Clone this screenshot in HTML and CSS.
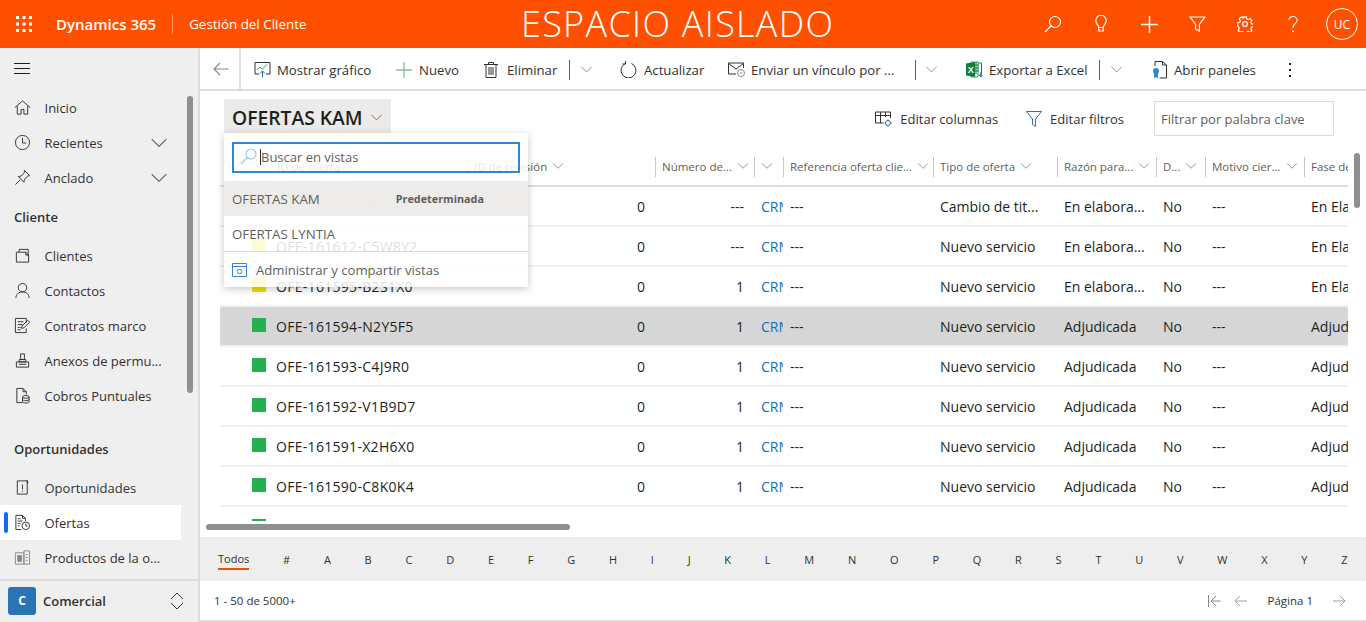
FILE: index.html
```html
<!DOCTYPE html>
<html lang="es">
<head>
<meta charset="utf-8">
<title>Ofertas KAM</title>
<link rel="stylesheet" href="styles.css">
</head>
<body>
<svg class="defs" width="0" height="0" aria-hidden="true">
  <symbol id="chev" viewBox="0 0 16 16"><path d="M1.5 4.5 8 11l6.5-6.5" fill="none" stroke="currentColor"/></symbol>
</svg>

<header class="topbar">
  <svg class="waffle" width="16" height="16" viewBox="0 0 16 16" fill="#fff"><rect x="0" y="0" width="3" height="3"/><rect x="6.5" y="0" width="3" height="3"/><rect x="13" y="0" width="3" height="3"/><rect x="0" y="6.5" width="3" height="3"/><rect x="6.5" y="6.5" width="3" height="3"/><rect x="13" y="6.5" width="3" height="3"/><rect x="0" y="13" width="3" height="3"/><rect x="6.5" y="13" width="3" height="3"/><rect x="13" y="13" width="3" height="3"/></svg>
  <span class="brand">Dynamics 365</span>
  <span class="brand-sep"></span>
  <span class="app-name">Gestión del Cliente</span>
  <span class="sandbox">ESPACIO AISLADO</span>
  <div class="top-icons">
    <svg width="18" height="18" viewBox="0 0 18 18" fill="none" stroke="#fff" stroke-width="1.2"><circle cx="11" cy="7" r="5.5"/><path d="M7 11 1 17"/></svg>
    <svg width="14" height="18" viewBox="0 0 16 20" fill="none" stroke="#fff" stroke-width="1.3"><path d="M5.5 14c0-3-3.5-4-3.500-8a5.500 5.500 0 0 1 12 0c0 4-3.500 5-3.500 8z"/><path d="M5.500 14v4h5v-4"/></svg>
    <svg width="17" height="17" viewBox="0 0 17 17" stroke="#fff" stroke-width="1.400"><path d="M8.500 0v17M0 8.500h17"/></svg>
    <svg width="17" height="16" viewBox="0 0 18 17" fill="none" stroke="#fff" stroke-width="1.200"><path d="M1 1h16l-6 8v7l-4-2V9z"/></svg>
    <svg width="16" height="16" viewBox="0 0 18 18" fill="none" stroke="#fff" stroke-width="1.300"><circle cx="9" cy="9" r="2.700"/><path d="M7.500 1h3l.5 2.300 1.700.8 2-1.200 2 2.100-1.200 2 .7 1.700 2.300.5v3l-2.300.5-.7 1.700 1.200 2-2 2-2-1.200-1.700.7-.5 2.300h-3l-.5-2.300-1.700-.7-2 1.200-2-2 1.200-2-.7-1.700L.800 10.500v-3l2.300-.5.7-1.700-1.200-2 2-2.100 2 1.200 1.700-.8z"/></svg>
    <svg width="10" height="17" viewBox="0 0 12 20" fill="none" stroke="#fff" stroke-width="1.300"><path d="M1 5a5 4.500 0 1 1 8 3.500C7 10 6 11 6 14"/><circle cx="6" cy="18" r=".6" fill="#fff"/></svg>
  </div>
  <span class="avatar">UC</span>
</header>

<div class="shell">
  <nav class="sidebar">
    <div class="hamburger"><span></span><span></span><span></span></div>
    <a class="nav-item"><svg class="nav-ico" viewBox="0 0 18 18"><path d="M1 9 9 2l8 7M3.500 7.500V16h4v-5h3v5h4V7.500"/></svg><span>Inicio</span></a>
    <a class="nav-item"><svg class="nav-ico" viewBox="0 0 18 18"><circle cx="9" cy="9" r="7.500"/><path d="M9 4v5.500h4"/></svg><span>Recientes</span><svg class="nav-chev"><use href="#chev"/></svg></a>
    <a class="nav-item"><svg class="nav-ico" viewBox="0 0 18 18"><path d="m11 1.500 5.500 5.500-2 .5-3.500 3.500-.5 3-6-6 3-.5L11 4zM6.500 11.500 1.500 16.500"/></svg><span>Anclado</span><svg class="nav-chev"><use href="#chev"/></svg></a>
    <h3 class="nav-head">Cliente</h3>
    <a class="nav-item"><svg class="nav-ico" viewBox="0 0 18 18"><path d="M2.500 5.500h10l3 3V16h-13zM5.500 5.500v-3h9.500V9M12.500 5.500v3h3"/></svg><span>Clientes</span></a>
    <a class="nav-item"><svg class="nav-ico" viewBox="0 0 18 18"><circle cx="9" cy="6" r="4.500"/><path d="M2 17c0-4 3-6.500 7-6.500s7 2.500 7 6.500"/></svg><span>Contactos</span></a>
    <a class="nav-item"><svg class="nav-ico" viewBox="0 0 18 18"><path d="M13 6V1.500H1.500v15h11.500V12M4 5h6M4 8h5M4 11h3M4 13.500h3"/><path d="m8 12 .5-2.500 6-6 2 2-6 6z"/></svg><span>Contratos marco</span></a>
    <a class="nav-item"><svg class="nav-ico" viewBox="0 0 18 18"><path d="M7 2h4v6H7zM5.500 8h7v2.500h-7zM2.500 10.500h13V16h-13zM5 13h8"/></svg><span>Anexos de permu...</span></a>
    <a class="nav-item"><svg class="nav-ico" viewBox="0 0 18 18"><path d="M9 16.500H3V1.500h6.500l3.500 3.500v3M9.500 1.500V5H13"/><ellipse cx="12.500" cy="10.500" rx="3.500" ry="1.500"/><path d="M9 10.500v5c0 .8 1.600 1.500 3.500 1.500s3.500-.7 3.500-1.500v-5M9 13c0 .8 1.600 1.500 3.500 1.500S16 13.800 16 13"/></svg><span>Cobros Puntuales</span></a>
    <h3 class="nav-head nav-head-gap">Oportunidades</h3>
    <a class="nav-item"><svg class="nav-ico" viewBox="0 0 18 18"><path d="M3.500 2h10.500v14H3.500zM9 6v5M9 12.500v1.200M13 2h1.500v3"/></svg><span>Oportunidades</span></a>
    <a class="nav-item nav-active"><svg class="nav-ico" viewBox="0 0 18 18"><path d="M8 16.500H2V1.500h7l3 3v3M9 1.500v3h3M4 5h3M4 7.500h5M4 10h3M4 12.500h2"/><circle cx="12.500" cy="12.500" r="4"/><path d="M12.500 10v2.700h2"/></svg><span>Ofertas</span></a>
    <a class="nav-item"><svg class="nav-ico nav-ico-grey" viewBox="0 0 18 18"><path d="M1.500 4h9v12h-9zM10.500 4V2h6v14h-6z"/><path d="M4 7h4v6H4z" fill="#8a8886"/><path d="M12.500 6h2M12.500 9h2M12.500 12h2"/></svg><span>Productos de la o...</span></a>
    <div class="nav-scroll"></div>
    <div class="area">
      <span class="area-badge">C</span>
      <span class="area-name">Comercial</span>
      <svg class="area-ud" width="14" height="18" viewBox="0 0 14 18" fill="none" stroke="#323130"><path d="m1 7 6-6 6 6M1 11l6 6 6-6"/></svg>
    </div>
  </nav>

  <main class="main">
    <div class="toolbar">
      <span class="tb-back"><svg width="16" height="14" viewBox="0 0 16 14" fill="none" stroke="#8a8886" stroke-width="1.100"><path d="M15.500 7H1M7 1 1 7l6 6"/></svg></span>
      <span class="tb-btn"><svg width="17" height="17" viewBox="0 0 17 17" fill="none"><path d="M5 13H1V1.500h15V13h-4" stroke="#323130"/><path d="m3 9 3-3 2.500 2L13 3.500" stroke="#2aa64a"/><path d="M8.500 16.500V10M6 12.500 8.500 10l2.500 2.500" stroke="#1f6fb2"/></svg>Mostrar gráfico</span>
      <span class="tb-btn"><svg width="16" height="16" viewBox="0 0 16 16" stroke="#7cc795" stroke-width="1.300"><path d="M8 0v16M0 8h16"/></svg><span class="t-nuevo">Nuevo</span></span>
      <span class="tb-btn"><svg width="14" height="16" viewBox="0 0 14 16" fill="none" stroke="#323130"><path d="M0 2.500h14M4.500 2.500V.5h5v2M2 2.500v13h10v-13M5 5v8M7 5v8M9 5v8"/></svg><span class="t-elim">Eliminar</span></span>
      <span class="tb-sep"></span>
      <span class="tb-chev"><svg width="13" height="13"><use href="#chev"/></svg></span>
      <span class="tb-btn"><svg width="17" height="17" viewBox="0 0 17 17" fill="none" stroke="#323130"><path d="M5.500 2.500a7.500 7.500 0 1 0 6 0M5.500 0v3H2.500" /></svg><span class="t-act">Actualizar</span></span>
      <span class="tb-btn"><svg width="17" height="15" viewBox="0 0 17 15" fill="none" stroke="#323130"><path d="M8 12H.5V1h15v5M.5 1.500 8 7l7.500-5.500"/><circle cx="13" cy="11" r="3.500" stroke="#8a8886"/><path d="M11.500 11h3" stroke="#8a8886"/></svg>Enviar un vínculo por ...</span>
      <span class="tb-sep"></span>
      <span class="tb-chev tb-chev-warm"><svg width="13" height="13"><use href="#chev"/></svg></span>
      <span class="tb-btn"><svg width="17" height="17" viewBox="0 0 17 17"><path d="M5 1h7v15H5z" fill="#fff" stroke="#21a366"/><path d="M7 4h6M7 7h6M7 10h6M10 1v12M12.500 2h3v12h-3" stroke="#107c41" fill="none"/><path d="M0 2.500 9 1v15L0 14.500z" fill="#107c41"/><text x="1.800" y="11.500" class="xl">X</text><path d="M15 11v5M13.500 14.500 15 16l1.500-1.500" stroke="#1f6fb2" fill="none"/></svg>Exportar a Excel</span>
      <span class="tb-sep"></span>
      <span class="tb-chev"><svg width="13" height="13"><use href="#chev"/></svg></span>
      <span class="tb-btn"><svg width="15" height="18" viewBox="0 0 15 18" fill="none"><path d="M3 5V.5h7.500L14.500 4v13h-7" stroke="#323130"/><path d="M10.500.5V4h4" stroke="#323130"/><circle cx="4" cy="10" r="3" fill="#2b88d8"/><path d="M2 12v5.500l2-1.500 2 1.500V12" fill="#2b88d8"/></svg><span class="t-abrir">Abrir paneles</span></span>
      <span class="tb-more"><i></i><i></i><i></i></span>
    </div>

    <div class="titlebar">
      <button class="view-btn"><span>OFERTAS KAM</span><svg width="13" height="13" class="view-chev"><use href="#chev"/></svg></button>
      <div class="title-actions">
        <span class="act"><svg width="17" height="16" viewBox="0 0 17 16" fill="none" stroke="#323130"><path d="M.5 1h15v6M.5 1v11h8M.5 4.500h15M5.500 1v11M10.500 1v5"/><circle cx="13" cy="12" r="2.500" stroke="#1f6fb2"/><path d="M13 8.500v1M13 14.500v1M9.500 12h1M15.500 12h1" stroke="#1f6fb2"/></svg>Editar columnas</span>
        <span class="act act-f"><svg width="16" height="16" viewBox="0 0 16 16" fill="none" stroke="#1f78b4"><path d="M.5.5h15l-6 7.500v7.500l-3-2V8z"/></svg>Editar filtros</span>
        <span class="filter-box">Filtrar por palabra clave</span>
      </div>
    </div>

    <div class="table">
      <div class="row head">
        <div class="cell c-id"><svg class="hcheck" width="14" height="14" viewBox="0 0 14 14" fill="none" stroke="#8a8886"><path d="m1 7 4 5L13 1"/></svg><svg class="hc" width="12" height="12"><use href="#chev"/></svg><span>ID de oferta</span><svg class="hc" width="12" height="12"><use href="#chev"/></svg></div>
        <div class="cell sep"><span>ID de revisión</span><svg class="hc" width="12" height="12"><use href="#chev"/></svg></div>
        <div class="cell sep"><span>Número de...</span><svg class="hc" width="12" height="12"><use href="#chev"/></svg></div>
        <div class="cell sep"><svg class="hc" width="12" height="12"><use href="#chev"/></svg></div>
        <div class="cell sep"><span>Referencia oferta clie...</span><svg class="hc" width="12" height="12"><use href="#chev"/></svg></div>
        <div class="cell sep"><span>Tipo de oferta</span><svg class="hc" width="12" height="12"><use href="#chev"/></svg></div>
        <div class="cell sep"><span>Razón para...</span><svg class="hc" width="12" height="12"><use href="#chev"/></svg></div>
        <div class="cell sep"><span>D...</span><svg class="hc" width="12" height="12"><use href="#chev"/></svg></div>
        <div class="cell sep"><span>Motivo cier...</span><svg class="hc" width="12" height="12"><use href="#chev"/></svg></div>
        <div class="cell sep"><span>Fase de</span></div>
      </div>
      <div class="rows">
        <div class="row"><div class="cell c-id"><i class="sq yellow"></i>OFE-161614-Z8V0L4</div><div class="cell num">0</div><div class="cell num">---</div><div class="cell crm">CRM</div><div class="cell">---</div><div class="cell">Cambio de tit...</div><div class="cell">En elabora...</div><div class="cell">No</div><div class="cell">---</div><div class="cell">En Elab</div></div>
        <div class="row"><div class="cell c-id"><i class="sq yellow"></i>OFE-161612-C5W8Y2</div><div class="cell num">0</div><div class="cell num">---</div><div class="cell crm">CRM</div><div class="cell">---</div><div class="cell">Nuevo servicio</div><div class="cell">En elabora...</div><div class="cell">No</div><div class="cell">---</div><div class="cell">En Elab</div></div>
        <div class="row"><div class="cell c-id"><i class="sq yellow"></i>OFE-161595-B2S1X0</div><div class="cell num">0</div><div class="cell num">1</div><div class="cell crm">CRM</div><div class="cell">---</div><div class="cell">Nuevo servicio</div><div class="cell">En elabora...</div><div class="cell">No</div><div class="cell">---</div><div class="cell">En Elab</div></div>
        <div class="row selected"><div class="cell c-id"><i class="sq green"></i>OFE-161594-N2Y5F5</div><div class="cell num">0</div><div class="cell num">1</div><div class="cell crm">CRM</div><div class="cell">---</div><div class="cell">Nuevo servicio</div><div class="cell">Adjudicada</div><div class="cell">No</div><div class="cell">---</div><div class="cell">Adjudi</div></div>
        <div class="row"><div class="cell c-id"><i class="sq green"></i>OFE-161593-C4J9R0</div><div class="cell num">0</div><div class="cell num">1</div><div class="cell crm">CRM</div><div class="cell">---</div><div class="cell">Nuevo servicio</div><div class="cell">Adjudicada</div><div class="cell">No</div><div class="cell">---</div><div class="cell">Adjudi</div></div>
        <div class="row"><div class="cell c-id"><i class="sq green"></i>OFE-161592-V1B9D7</div><div class="cell num">0</div><div class="cell num">1</div><div class="cell crm">CRM</div><div class="cell">---</div><div class="cell">Nuevo servicio</div><div class="cell">Adjudicada</div><div class="cell">No</div><div class="cell">---</div><div class="cell">Adjudi</div></div>
        <div class="row"><div class="cell c-id"><i class="sq green"></i>OFE-161591-X2H6X0</div><div class="cell num">0</div><div class="cell num">1</div><div class="cell crm">CRM</div><div class="cell">---</div><div class="cell">Nuevo servicio</div><div class="cell">Adjudicada</div><div class="cell">No</div><div class="cell">---</div><div class="cell">Adjudi</div></div>
        <div class="row"><div class="cell c-id"><i class="sq green"></i>OFE-161590-C8K0K4</div><div class="cell num">0</div><div class="cell num">1</div><div class="cell crm">CRM</div><div class="cell">---</div><div class="cell">Nuevo servicio</div><div class="cell">Adjudicada</div><div class="cell">No</div><div class="cell">---</div><div class="cell">Adjudi</div></div>
        <div class="row"><div class="cell c-id"><i class="sq green"></i></div></div>
      </div>
    </div>
    <div class="hscroll-lane"><div class="hscroll"></div></div>

    <div class="alpha">
      <span class="alpha-all">Todos</span><span>#</span><span>A</span><span>B</span><span>C</span><span>D</span><span>E</span><span>F</span><span>G</span><span>H</span><span>I</span><span>J</span><span>K</span><span>L</span><span>M</span><span>N</span><span>O</span><span>P</span><span>Q</span><span>R</span><span>S</span><span>T</span><span>U</span><span>V</span><span>W</span><span>X</span><span>Y</span><span>Z</span>
    </div>
    <div class="pager">
      <span class="count">1 - 50 de 5000+</span>
      <span class="pages">
        <svg width="13" height="12" viewBox="0 0 13 12" fill="none" stroke="#8a8886"><path d="M.5 0v12M12.500 6H3M8 1 3 6l5 5"/></svg>
        <svg class="pg-prev" width="13" height="12" viewBox="0 0 13 12" fill="none" stroke="#a19f9d"><path d="M13 6H1M6 1 1 6l5 5"/></svg>
        <span class="page-no">Página 1</span>
        <svg class="pg-next" width="13" height="12" viewBox="0 0 13 12" fill="none" stroke="#a19f9d"><path d="M0 6h12M7 1l5 5-5 5"/></svg>
      </span>
    </div>

    <div class="vscroll"></div>

    <div class="dropdown">
      <div class="dd-search"><svg width="17" height="17" viewBox="0 0 17 17" fill="none" stroke="#8cc4ec" stroke-width="1.100"><circle cx="11" cy="6" r="5"/><path d="M7.500 9.500 1 16"/></svg><span class="dd-caret"></span><span>Buscar en vistas</span></div>
      <div class="dd-item dd-current"><span>OFERTAS KAM</span><b>Predeterminada</b></div>
      <div class="dd-item">OFERTAS LYNTIA</div>
      <div class="dd-manage"><svg width="15" height="14" viewBox="0 0 15 14" fill="none" stroke="#2b88d8"><path d="M.5.5h14v13H.5zM.5 3.500h14"/><circle cx="7.500" cy="8.500" r="2.200"/></svg><span>Administrar y compartir vistas</span></div>
    </div>
  </main>
</div>
</body>
</html>
```
FILE: styles.css
```css
* { box-sizing: border-box; }
html, body { margin: 0; height: 622px; overflow: hidden; }
body {
  font-family: "Open Sans", "Noto Sans", sans-serif;
  font-size: 13px;
  color: #323130;
  display: flex;
  flex-direction: column;
  background: #fff;
}
.defs { position: absolute; }

/* top bar */
.topbar {
  height: 48px;
  flex: none;
  background: #ff5000;
  color: #fff;
  display: flex;
  align-items: center;
  padding-left: 16px;
  position: relative;
}
.waffle { flex: none; }
.brand { margin-left: 24px; font-size: 15px; font-weight: 600; }
.brand-sep { width: 1px; height: 20px; background: rgba(255,255,255,.4); margin: 0 16px; }
.app-name { font-size: 13.400px; }
.sandbox {
  position: absolute;
  left: 521px;
  top: 0;
  line-height: 48px;
  font-size: 36px;
  font-weight: 300;
  letter-spacing: 1.300px;
  white-space: nowrap;
}
.top-icons {
  margin-left: auto;
  display: grid;
  grid-template-columns: repeat(6, 48px);
  justify-items: center;
  align-items: center;
}
.avatar {
  width: 32px;
  height: 32px;
  margin: 0 8px 0 9px;
  border: 1px solid #fff;
  border-radius: 50%;
  display: flex;
  align-items: center;
  justify-content: center;
  font-size: 12px;
}

.shell { flex: 1; display: flex; min-height: 0; }

/* sidebar */
.sidebar {
  width: 200px;
  flex: none;
  background: #efefef;
  border-right: 2px solid #dcdcdc;
  position: relative;
  overflow: hidden;
}
.hamburger { height: 42px; padding: 15px 0 0 14px; display: flex; flex-direction: column; gap: 4px; }
.hamburger span { width: 16px; height: 1px; background: #201f1e; }
.nav-item {
  height: 35px;
  width: 181px;
  display: flex;
  align-items: center;
  padding-left: 14px;
  color: #323130;
  position: relative;
}
.nav-ico { width: 17px; height: 17px; flex: none; margin-right: 13.500px; fill: none; stroke: #323130; stroke-width: 1; }
.nav-ico-grey { stroke: #8a8886; }
.nav-chev { width: 18px; height: 18px; position: absolute; right: 13px; top: 9px; color: #4a6785; }
.nav-head { margin: 0; height: 43px; line-height: 45px; padding-left: 14px; font-size: 13px; font-weight: 600; }
.nav-head-gap { height: 57px; line-height: 72px; }
.nav-active { background: #fff; }
.nav-active::before {
  content: "";
  position: absolute;
  left: 4px;
  top: 7px;
  width: 4px;
  height: 21px;
  background: #0f6cf2;
  border-radius: 2px;
}
.nav-scroll {
  position: absolute;
  left: 187px;
  top: 48px;
  width: 6px;
  height: 297px;
  background: #8f8f8f;
  border-radius: 3px;
}
.area {
  position: absolute;
  left: 0;
  right: 0;
  bottom: 0;
  height: 43px;
  background: #efefef;
  border-top: 2px solid #dcdcdc;
  display: flex;
  align-items: center;
  padding: 0 0 2px 8px;
}
.area-badge {
  width: 28px;
  height: 28px;
  background: #2b74b3;
  color: #fff;
  border-radius: 3px;
  font-weight: 700;
  font-size: 12px;
  display: flex;
  align-items: center;
  justify-content: center;
}
.area-name { margin-left: 7px; font-weight: 600; font-size: 13px; }
.area-ud { margin-left: auto; margin-right: 14px; }

/* main */
.main { flex: 1; min-width: 0; display: flex; flex-direction: column; position: relative; }
.toolbar {
  height: 43px;
  flex: none;
  border-bottom: 2px solid #dedede;
  display: grid;
  grid-template-columns: 41px 13px 142px 88px 85px 11px 40px 108px 187px 10px 41px 133px 11px 42px 130px 1fr;
  align-items: center;
  font-size: 13.200px;
}
.tb-back { grid-column: 1; height: 41px; border-right: 2px solid #dedede; display: flex; align-items: center; padding-left: 13px; }
.tb-btn { display: flex; align-items: center; gap: 6px; white-space: nowrap; padding-top: 2px; }
.toolbar > .tb-btn:nth-child(2) { grid-column: 3; }
.t-nuevo { margin-left: 1px; }
.t-elim { margin-left: 3px; }
.t-act { margin-left: 1px; }
.t-abrir { margin-left: 1px; }
.tb-sep { width: 1px; height: 20px; margin-top: 2px; background: #605e5c; }
.tb-chev { color: #797775; display: flex; justify-content: center; width: 20px; margin: 1px 0 0 -4px; }
.tb-chev-warm { color: #a67c60; }
.tb-more { display: flex; flex-direction: column; gap: 4px; padding: 2px 0 0 7px; }
.tb-more i { width: 2px; height: 2px; background: #201f1e; }
.xl { font: 700 9px "Liberation Sans", sans-serif; fill: #fff; }

.titlebar { height: 59px; flex: none; position: relative; display: flex; }
.view-btn {
  position: absolute;
  left: 24px;
  top: 8px;
  width: 167px;
  height: 34px;
  border: 0;
  background: #edebe9;
  padding: 3px 0 0 8px;
  display: flex;
  align-items: center;
  gap: 7px;
  font-family: inherit;
  font-size: 19.300px;
  font-weight: 600;
  color: #201f1e;
}
.view-chev { color: #605e5c; }
.title-actions { margin-left: auto; display: flex; align-items: flex-start; padding-right: 32px; padding-top: 10px; }
.act { display: flex; align-items: center; gap: 8px; height: 35px; }
.act-f { margin-left: 28px; }
.filter-box {
  margin-left: 30px;
  width: 180px;
  height: 35px;
  border: 1px solid #dcdcdc;
  display: flex;
  align-items: center;
  padding-left: 6px;
  color: #605e5c;
}

/* table */
.table { margin-left: 20px; width: 1128px; overflow: hidden; flex: none; }
.row {
  display: grid;
  grid-template-columns: 247px 188px 99px 29px 150px 124px 99px 49px 99px 99px;
  height: 40px;
  border-bottom: 2px solid #f3f2f1;
  align-items: center;
  color: #201f1e;
  font-size: 14px;
}
.row.head { height: 37px; border-bottom: 2px solid #e1dfdd; color: #605e5c; font-size: 11.500px; align-items: start; padding-top: 7px; }
.head .cell { height: 20px; display: flex; align-items: center; gap: 5px; padding-bottom: 2px; }
.head .sep { border-left: 1px solid #c8c6c4; padding-left: 6px; }
.hc { color: #797775; flex: none; }
.head .c-id { padding-left: 9px; letter-spacing: 0; }
.head .c-id span { margin-left: 6px; }
.hcheck { margin-right: 6px; }
.cell { padding: 0 7px; white-space: nowrap; overflow: hidden; min-width: 0; }
.c-id { padding-left: 32px; display: flex; align-items: center; letter-spacing: .3px; }
.sq { width: 14px; height: 14px; margin-right: 10px; flex: none; position: relative; top: -1px; }
.yellow { background: #f0e000; }
.green { background: #22b14c; }
.num { text-align: right; padding-right: 10px; }
.crm { color: #106ebe; padding-right: 0; }
.selected { background: #d6d6d6; }
.rows { height: 334px; overflow: hidden; }
.hscroll-lane { height: 16px; flex: none; padding: 3px 0 0 6px; }
.hscroll { width: 364px; height: 6px; border-radius: 3px; background: #8f8f8f; }

.alpha {
  height: 44px;
  flex: none;
  background: #eeeeee;
  display: flex;
  align-items: center;
  gap: 33.750px;
  padding-left: 18px;
  font-size: 11px;
  color: #323130;
  white-space: nowrap;
}
.alpha-all { border-bottom: 2px solid #e8500a; line-height: 18px; margin-top: 2px; }
.pager {
  flex: 1;
  display: flex;
  align-items: center;
  padding-left: 14px;
  font-size: 11.500px;
  border-bottom: 2px solid #dcdcdc;
}
.pages { margin-left: auto; margin-right: 20px; display: flex; align-items: center; }
.pg-prev { margin-left: 13px; }
.page-no { margin: 0 20px 0 21px; }
.vscroll {
  position: absolute;
  left: 1154px;
  top: 105px;
  width: 6px;
  height: 55px;
  border-radius: 3px;
  background: #8f8f8f;
}

/* dropdown */
.dropdown {
  position: absolute;
  left: 24px;
  top: 85px;
  width: 304px;
  height: 154px;
  background: rgba(255,255,255,.85);
  box-shadow: 0 2px 8px rgba(0,0,0,.22);
  padding-top: 9px;
  font-size: 13.300px;
}
.dd-search {
  margin: 0 8px;
  width: 288px;
  height: 31px;
  border: 2px solid #2b88d8;
  display: flex;
  align-items: center;
  padding: 0 0 2px 6px;
  color: #605e5c;
  font-size: 13px;
  position: relative;
}
.dd-caret { width: 1px; height: 16px; background: #323130; margin: 0 0 0 3px; }
.dd-item {
  height: 35px;
  display: flex;
  align-items: center;
  padding-left: 8px;
  color: #605e5c;
}
.dd-current { margin-top: 8px; background: rgba(237,235,233,.95); }
.dd-current b { margin-left: 76px; font-size: 10.800px; font-weight: 700; color: #605e5c; }
.dd-manage {
  height: 37px;
  border-top: 1px solid #dcdcdc;
  display: flex;
  align-items: center;
  gap: 9px;
  padding-left: 8px;
  color: #605e5c;
  font-size: 13.100px;
}
```
